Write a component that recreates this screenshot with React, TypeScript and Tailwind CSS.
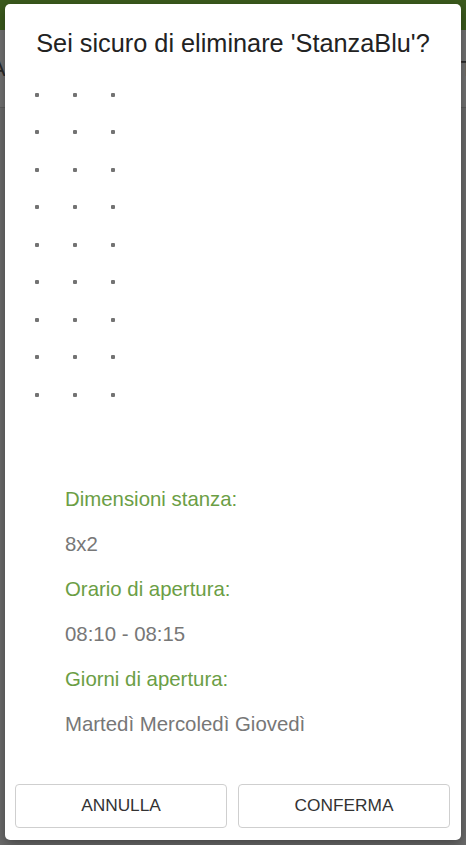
import React from "react";

const ROWS = 9;
const COLS = 3;

const details = [
  { label: "Dimensioni stanza:", value: "8x2" },
  { label: "Orario di apertura:", value: "08:10 - 08:15" },
  { label: "Giorni di apertura:", value: "Martedì Mercoledì Giovedì" },
];

export default function App() {
  return (
    <div
      className="relative h-[845px] w-full overflow-hidden bg-[#6b6b6b]"
      style={{ fontFamily: '"Liberation Sans", Arial, sans-serif' }}
    >
      {/* pagina sotto l'overlay */}
      <div className="h-[30px] bg-[#3b5a1d]" />
      <div className="flex h-[78px] items-center justify-between border-b border-[#5e5e5e] bg-[#727272] text-[22px] text-[#2a2a2a]">
        <span className="-ml-[9px]">A</span>
        <span className="-mr-[8px]">T</span>
      </div>

      {/* dialog */}
      <div className="absolute left-[5px] top-[4px] flex h-[836px] w-[456px] flex-col rounded-[5px] bg-white shadow-[0_4px_12px_rgba(0,0,0,0.35)]">
        <h1 className="mt-[24px] text-center text-[25.3px] leading-[30px] text-[#222]">
          Sei sicuro di eliminare 'StanzaBlu'?
        </h1>

        <div className="ml-[13px] mt-[18px] grid w-[114px] grid-cols-3">
          {Array.from({ length: ROWS * COLS }, (_, i) => (
            <div key={i} className="flex h-[37.5px] items-center justify-center">
              <span className="block h-[4px] w-[4px] rounded-[1px] bg-[#737373]" />
            </div>
          ))}
        </div>

        <div className="ml-[60px] mt-[63px] flex flex-col text-[20.4px] leading-[45px]">
          {details.map((d) => (
            <React.Fragment key={d.label}>
              <div className="text-[#6b9e45]">{d.label}</div>
              <div className="text-[#777]">{d.value}</div>
            </React.Fragment>
          ))}
        </div>

        <div className="mt-auto mb-[12px] flex gap-[11px] pl-[10px] pr-[11px]">
          <button
            type="button"
            className="h-[44px] flex-1 rounded-[4px] border border-[#cfcfcf] bg-white text-[17.3px] text-[#333]"
          >
            ANNULLA
          </button>
          <button
            type="button"
            className="h-[44px] flex-1 rounded-[4px] border border-[#cfcfcf] bg-white text-[17.3px] text-[#333]"
          >
            CONFERMA
          </button>
        </div>
      </div>
    </div>
  );
}
